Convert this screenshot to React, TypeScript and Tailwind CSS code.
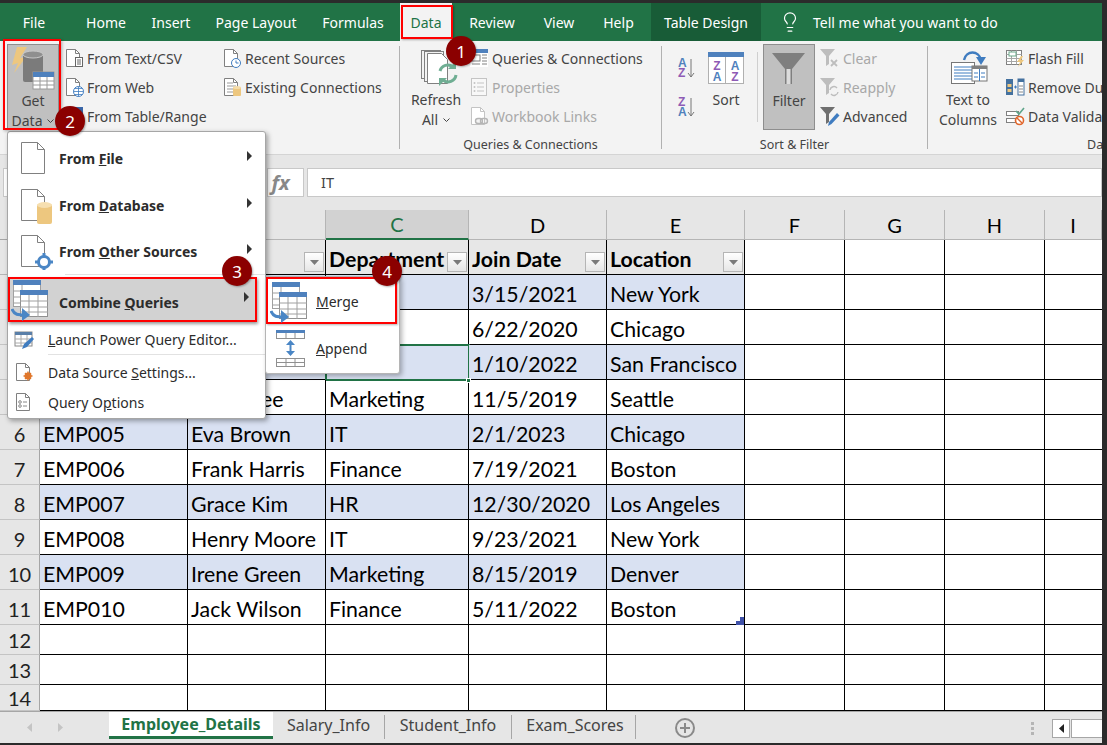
import React from 'react';
import { Lightbulb } from 'lucide-react';

const G = '#808080';
const BLUE = '#4f81bd';
const YEL = '#edc77f';

const Doc = ({ c = G }: { c?: string }) => (
  <>
    <path d="M2.5 1.5h9l4 4v13h-13z" fill="#fff" stroke={c} />
    <path d="M11.5 1.5v4h4" fill="none" stroke={c} />
  </>
);
const S = ({ children, w = 20, h = 20 }: { children: React.ReactNode; w?: number; h?: number }) => (
  <svg width={w} height={h} viewBox={`0 0 ${w} ${h}`} className="shrink-0 block">{children}</svg>
);

const IcCsv = () => (
  <S><Doc /><rect x="11.5" y="9.5" width="7" height="9" fill="#fff" stroke="#666" /><path d="M13 12h4M13 14h4M13 16h4" stroke="#666" /></S>
);
const IcWeb = () => (
  <S><Doc /><circle cx="14.5" cy="14.5" r="5" fill="#fff" stroke="#3f7cc0" /><path d="M9.5 14.5h10M14.5 9.5v10M11 11.5h7M11 17.5h7" stroke="#3f7cc0" strokeWidth="0.8" /></S>
);
const IcRange = () => (
  <S><rect x="1.5" y="1.5" width="17" height="17" fill="#fff" stroke="#3a66a8" /><rect x="1" y="1" width="18" height="5" fill="#3a66a8" /><path d="M7 6v12M13 6v12M2 12h16" stroke="#3a66a8" /></S>
);
const IcRecent = () => (
  <S><Doc /><circle cx="14" cy="15" r="4.5" fill="#fff" stroke="#3f7cc0" /><path d="M14 12.5V15h2.5" fill="none" stroke="#3f7cc0" /></S>
);
const IcExisting = () => (
  <S>
    <Doc />
    <path d="M5 6h6M5 9h9M5 12h7M5 15h7" stroke="#999" />
    <rect x="11" y="10" width="8" height="9" rx="1" fill={YEL} />
    <ellipse cx="15" cy="10.5" rx="4" ry="1.6" fill="#f5dca8" />
  </S>
);
const IcQueries = () => (
  <S>
    <rect x="1" y="1" width="18" height="18" fill="#fff" />
    <rect x="1" y="1" width="18" height="4" fill={BLUE} />
    <rect x="3" y="7" width="8" height="6" fill="#fff" stroke="#808080" />
    <path d="M13 7h5M13 10h5M13 13h5M13 16h5M3 16h8" stroke="#808080" />
  </S>
);
const IcProps = () => (
  <S>
    <rect x="2.5" y="1.5" width="15" height="17" fill="#f8f8f8" stroke="#c4c4c4" />
    <path d="M8 6h7M8 10h7M8 14h7" stroke="#c4c4c4" />
    <circle cx="5.5" cy="6" r="1" fill="#c4c4c4" /><circle cx="5.5" cy="10" r="1" fill="#c4c4c4" /><circle cx="5.5" cy="14" r="1" fill="#c4c4c4" />
  </S>
);
const IcLinks = () => (
  <S>
    <Doc c="#c4c4c4" />
    <rect x="6.5" y="12.5" width="7" height="5" rx="2.5" fill="#f3f3f3" stroke="#b5b5b5" strokeWidth="1.4" />
    <rect x="11.5" y="12.5" width="7" height="5" rx="2.5" fill="none" stroke="#b5b5b5" strokeWidth="1.4" />
  </S>
);
const Funnel = ({ c = '#808080' }: { c?: string }) => <path d="M0 1h15l-6 7v8l-3 2V8z" fill={c} />;
const IcClear = () => (
  <S><Funnel c="#bdbdbd" /><path d="M11 12l6 6M17 12l-6 6" stroke="#bdbdbd" strokeWidth="1.8" /></S>
);
const IcReapply = () => (
  <S><Funnel c="#bdbdbd" /><path d="M10 13a4 4 0 0 1 7-2M18 15a4 4 0 0 1-7 2" fill="none" stroke="#bdbdbd" strokeWidth="1.4" /></S>
);
const IcAdvanced = () => (
  <S><Funnel c="#6f6f6f" /><path d="M8 20l1-4 8-9 2.5 2.5-8 8.5z" fill="#3f7cc0" /></S>
);
const IcFlash = () => (
  <S>
    <rect x="1.5" y="2.5" width="15" height="14" fill="#fff" stroke="#808080" />
    <path d="M1.5 6.5h15M1.5 10.5h15M1.5 13.5h15M6.5 2.5v14M11.5 2.5v14" stroke="#a6a6a6" />
    <rect x="4" y="4" width="7" height="4" fill="#fff" stroke="#6aa88a" />
    <path d="M16 8l-4 6h3l-2 5 6-7h-3l2-4z" fill={YEL} />
  </S>
);
const IcDup = () => (
  <S>
    <rect x="1" y="2" width="7" height="16" fill="#44719f" />
    <rect x="2.5" y="7" width="4" height="3" fill={YEL} /><rect x="2.5" y="12" width="4" height="3" fill={YEL} />
    <rect x="13" y="2" width="6" height="16" fill="#fff" stroke="#44719f" />
    <rect x="13" y="2" width="6" height="3" fill="#44719f" />
    <path d="M14 9h4M14 12h4M14 15h4" stroke="#888" />
    <path d="M9 10h3M10.5 8.5v3" stroke="#3f7cc0" />
  </S>
);
const IcValid = () => (
  <S>
    <rect x="1.5" y="5.5" width="12" height="4" fill="#fff" stroke="#808080" />
    <rect x="1.5" y="12.5" width="12" height="4" fill="#fff" stroke="#808080" />
    <path d="M11 5l3 3 5-6" fill="none" stroke="#5fa58a" strokeWidth="1.6" />
    <circle cx="14.5" cy="14.5" r="4" fill="#fff" stroke="#e0662b" strokeWidth="1.6" />
    <path d="M12 12l5 5" stroke="#e0662b" strokeWidth="1.4" />
  </S>
);

const GetDataIcon = () => (
  <S w={52} h={46}>
    <path d="M20 2H10L5 20l6-2-4 10 12-16-6 1z" fill={YEL} />
    <rect x="16" y="9" width="20" height="28" rx="2" fill="#7b7b7b" />
    <ellipse cx="26" cy="9.5" rx="10" ry="3.5" fill="#8f8f8f" stroke="#c8c8c8" />
    <rect x="26" y="27" width="21" height="17" fill="#fff" stroke="#9a9a9a" />
    <rect x="26" y="27" width="21" height="5" fill={BLUE} />
    <path d="M33 32v12M40 32v12M26 36h21M26 40h21" stroke="#9a9a9a" />
  </S>
);
const RefreshIcon = () => (
  <S w={48} h={46}>
    <rect x="9.5" y="6.5" width="19" height="28" fill="#f3f3f3" stroke={G} />
    <rect x="12.5" y="7.5" width="19" height="30" fill="#f3f3f3" stroke={G} />
    <path d="M15.5 9.5h14l6 6v24h-20z" fill="#fff" stroke={G} />
    <path d="M28 27a8 8 0 0 1 13-4M44 31a8 8 0 0 1-13 5" fill="none" stroke="#6fae93" strokeWidth="3" />
    <path d="M44 17v8h-8zM27 42v-8h8z" fill="#6fae93" />
  </S>
);
const AZ = ({ a, b, ca, cb }: { a: string; b: string; ca: string; cb: string }) => (
  <S w={20} h={24}>
    <text x="1" y="11" fontSize="12" fontWeight="700" fill={ca} fontFamily="Liberation Sans">{a}</text>
    <text x="1" y="21" fontSize="12" fontWeight="700" fill={cb} fontFamily="Liberation Sans">{b}</text>
    <path d="M14 3v18M11 17l3 4 3-4" fill="none" stroke="#777" />
  </S>
);
const SortIcon = () => (
  <S w={36} h={32}>
    <rect x="0.5" y="0.5" width="35" height="31" fill="#fff" stroke="#b0b0b0" />
    <rect x="0" y="0" width="36" height="5" fill={BLUE} />
    <path d="M17.5 5v27" stroke="#b0b0b0" />
    <text x="9" y="18" textAnchor="middle" fontSize="12" fontWeight="600" fill="#8e5bb5" fontFamily="Liberation Sans">Z</text>
    <text x="9" y="29" textAnchor="middle" fontSize="12" fontWeight="600" fill={BLUE} fontFamily="Liberation Sans">A</text>
    <text x="27" y="18" textAnchor="middle" fontSize="12" fontWeight="600" fill={BLUE} fontFamily="Liberation Sans">A</text>
    <text x="27" y="29" textAnchor="middle" fontSize="12" fontWeight="600" fill="#8e5bb5" fontFamily="Liberation Sans">Z</text>
  </S>
);
const FilterIcon = () => (
  <S w={52} h={46}>
    <path d="M9 8h33L29 24v15h-7V24z" fill="#7f7f7f" />
    <rect x="23.5" y="24" width="4" height="15" fill="#dcdcdc" />
  </S>
);
const TextColsIcon = () => (
  <S w={56} h={46}>
    <rect x="11.5" y="18.5" width="23" height="21" fill="#fff" stroke="#777" />
    <path d="M14 23h18M14 26h18M14 29h18M14 32h18M14 35h18" stroke="#3f7cc0" />
    <rect x="32" y="22" width="15" height="15" fill="#fff" stroke="#777" />
    <rect x="32" y="22" width="15" height="3" fill="#808080" />
    <path d="M39.5 25v12M34 29h4M41 29h4M34 33h4M41 33h4" stroke="#3f7cc0" />
    <path d="M24 16c2-10 15-10 17 0" fill="none" stroke="#3f7cc0" strokeWidth="2.4" />
    <path d="M36 13h10l-5 8z" fill="#3f7cc0" />
  </S>
);

const MDoc = ({ extra, h = 36 }: { extra?: React.ReactNode; h?: number }) => (
  <S w={36} h={h}>
    <path d="M1.5 1.5h16l7 7v24h-23z" fill="#fff" stroke={G} />
    <path d="M17.5 1.5v7h7" fill="none" stroke={G} />
    {extra}
  </S>
);
const Combine = ({ w = 38, h = 42 }: { w?: number; h?: number }) => (
  <S w={w} h={h}>
    <rect x="2.5" y="1.5" width="27" height="26" fill="#fff" stroke="#a0a0a0" />
    <rect x="2" y="1" width="28" height="5" fill={BLUE} />
    <path d="M2 12h28M2 18h28M2 24h28M11 6v22" stroke="#a0a0a0" />
    <rect x="9.5" y="11.5" width="27" height="26" fill="#fff" stroke="#909090" />
    <rect x="9" y="11" width="28" height="5" fill={BLUE} />
    <path d="M9 22h28M9 28h28M9 33h28M18 16v22M27 16v22" stroke="#a0a0a0" />
    <path d="M1 30c2 6 6 6 14 6" fill="none" stroke="#4a86c5" strokeWidth="3" />
    <path d="M11 29l8 7-8 6z" fill="#4a86c5" />
  </S>
);
const AppendIc = () => (
  <S w={30} h={38}>
    <rect x="0.5" y="0.5" width="28" height="8" fill="#fff" stroke="#909090" />
    <rect x="0" y="0" width="29" height="3" fill={BLUE} />
    <path d="M10 3v5M19 3v5" stroke="#909090" />
    <rect x="0.5" y="28.5" width="28" height="8" fill="#fff" stroke="#909090" />
    <path d="M10 28v9M19 28v9M0 32.5h29" stroke="#909090" />
    <path d="M14.5 12v12" stroke="#4a86c5" strokeWidth="2" />
    <path d="M10 15l4.5-5 4.5 5zM10 21l4.5 5 4.5-5z" fill="#4a86c5" />
  </S>
);
const Arrow = () => (
  <svg width="5" height="10" viewBox="0 0 5 10" className="shrink-0 -mt-[6px]"><path d="M0 0l5 5-5 5z" fill="#333" /></svg>
);

const Row = ({ icon, text, off }: { icon: React.ReactNode; text: string; off?: boolean }) => (
  <div className={`flex items-center h-[29px] gap-[3px] whitespace-nowrap ${off ? 'text-[#a8a8a8]' : ''}`}>
    <div className="w-[20px]">{icon}</div>
    <span>{text}</span>
  </div>
);

const Big = ({ icon, l1, l2, caret, cls }: { icon: React.ReactNode; l1: string; l2?: string; caret?: boolean; cls: string }) => (
  <div className={`flex flex-col items-center h-[86px] mt-[3px] ${cls}`}>
    <div className="h-[46px] shrink-0">{icon}</div>
    <div className="leading-[20px] whitespace-nowrap">{l1}</div>
    {l2 && (
      <div className="leading-[20px] whitespace-nowrap flex items-center gap-[5px]">
        {l2}
        {caret && <svg width="7" height="4" viewBox="0 0 7 4"><path d="M0.5 0.5l3 3 3-3" fill="none" stroke="#444" /></svg>}
      </div>
    )}
  </div>
);

const Sep = () => <div className="w-px bg-[#b1b1b1] mt-[5px] mb-[5px] shrink-0" />;

const tabs: [string, string][] = [
  ['File', 'w-[68px]'],
  ['Home', 'w-[76px]'],
  ['Insert', 'w-[54px]'],
  ['Page Layout', 'w-[116px]'],
  ['Formulas', 'w-[78px]'],
];
const tabs2: [string, string][] = [
  ['Review', 'w-[80px]'],
  ['View', 'w-[54px]'],
  ['Help', 'w-[65px]'],
];

type RowData = { n: number; c: string[]; band?: boolean };
const rows: RowData[] = [
  { n: 2, c: ['', '', '', '3/15/2021', 'New York'], band: true },
  { n: 3, c: ['', '', '', '6/22/2020', 'Chicago'] },
  { n: 4, c: ['', '', '', '1/10/2022', 'San Francisco'], band: true },
  { n: 5, c: ['', 'David Lee', 'Marketing', '11/5/2019', 'Seattle'] },
  { n: 6, c: ['EMP005', 'Eva Brown', 'IT', '2/1/2023', 'Chicago'], band: true },
  { n: 7, c: ['EMP006', 'Frank Harris', 'Finance', '7/19/2021', 'Boston'] },
  { n: 8, c: ['EMP007', 'Grace Kim', 'HR', '12/30/2020', 'Los Angeles'], band: true },
  { n: 9, c: ['EMP008', 'Henry Moore', 'IT', '9/23/2021', 'New York'] },
  { n: 10, c: ['EMP009', 'Irene Green', 'Marketing', '8/15/2019', 'Denver'], band: true },
  { n: 11, c: ['EMP010', 'Jack Wilson', 'Finance', '5/11/2022', 'Boston'] },
  { n: 12, c: ['', '', '', '', ''] },
  { n: 13, c: ['', '', '', '', ''] },
  { n: 14, c: ['', '', '', '', ''] },
];
const colHeads = ['A', 'B', 'C', 'D', 'E', 'F', 'G', 'H', 'I'];
const cell = 'border-r border-b border-black flex items-center pl-[3px] pt-[5px] whitespace-nowrap overflow-hidden';
const headCell = 'border-r border-b border-black bg-[#e7e7e7] flex items-end justify-between pl-[3px] pb-[1px] pr-px font-bold text-black';

const FilterBtn = () => (
  <div className="w-[20px] h-[20px] shrink-0 mb-px border border-[#b5b5b5] bg-gradient-to-b from-white to-[#e6e6e6] flex items-center justify-center">
    <svg width="9" height="5" viewBox="0 0 9 5"><path d="M0 0h9L4.5 5z" fill="#7a7a7a" /></svg>
  </div>
);

const Badge = ({ n, cls }: { n: number; cls: string }) => (
  <div className={`absolute w-[30px] h-[30px] rounded-full bg-[#8b0000] text-white text-[17px] leading-none flex items-center justify-center shadow-[1px_1px_2px_rgba(0,0,0,0.3)] font-['Liberation_Sans',sans-serif] ${cls}`}>{n}</div>
);

export default function App() {
  return (
    <div className="relative w-[1107px] h-[745px] overflow-hidden bg-[#2b2b2b] pt-[3px] pr-[5px] pb-[2px] text-[14px] text-[#444] font-['Noto_Sans',sans-serif]">
      <div className="w-[1102px] h-[740px] flex flex-col overflow-hidden bg-white">
        {/* tab strip */}
        <div className="h-[38px] shrink-0 bg-[#217346] text-white flex items-center text-[14px]">
          {tabs.map(([t, w]) => (
            <div key={t} className={`${w} text-center`}>{t}</div>
          ))}
          <div className="w-[8px]" />
          <div className="w-[52px] h-full bg-[#f3f3f3] text-[#217346] flex items-center justify-center">Data</div>
          {tabs2.map(([t, w]) => (
            <div key={t} className={`${w} text-center`}>{t}</div>
          ))}
          <div className="w-[110px] h-full bg-[#185c37] flex items-center justify-center">Table Design</div>
          <div className="ml-[18px] w-[34px]"><Lightbulb size={22} strokeWidth={1.3} color="#fff" /></div>
          <div className="whitespace-nowrap">Tell me what you want to do</div>
        </div>

        {/* ribbon */}
        <div className="h-[114px] shrink-0 bg-[#f3f3f3] border-b border-[#d4d4d4] flex">
          <div className="w-[399px] shrink-0 flex">
            <Big icon={<GetDataIcon />} l1="Get" l2="Data" caret cls="ml-[7px] w-[52px] bg-[#c0c0c0] border border-[#8e8e8e]" />
            <div className="ml-[5px] w-[158px] mt-[2.5px]">
              <Row icon={<IcCsv />} text="From Text/CSV" />
              <Row icon={<IcWeb />} text="From Web" />
              <Row icon={<IcRange />} text="From Table/Range" />
            </div>
            <div className="mt-[2.5px]">
              <Row icon={<IcRecent />} text="Recent Sources" />
              <Row icon={<IcExisting />} text="Existing Connections" />
            </div>
          </div>
          <Sep />

          <div className="w-[261px] shrink-0 flex flex-col">
            <div className="h-[95px] flex">
              <Big icon={<RefreshIcon />} l1="Refresh" l2="All" caret cls="ml-[12px] w-[48px]" />
              <div className="ml-[9px] mt-[2.5px]">
                <Row icon={<IcQueries />} text="Queries & Connections" />
                <Row icon={<IcProps />} text="Properties" off />
                <Row icon={<IcLinks />} text="Workbook Links" off />
              </div>
            </div>
            <div className="text-center text-[12.5px] leading-[18px]">Queries &amp; Connections</div>
          </div>
          <Sep />

          <div className="w-[265px] shrink-0 flex flex-col">
            <div className="h-[95px] flex">
              <div className="ml-[15px] w-[20px] pt-[15px] flex flex-col gap-[15px]">
                <AZ a="A" b="Z" ca={BLUE} cb="#8e5bb5" />
                <AZ a="Z" b="A" ca="#8e5bb5" cb={BLUE} />
              </div>
              <Big icon={<div className="pt-[8px]"><SortIcon /></div>} l1="Sort" cls="ml-[11px] w-[36px]" />
              <div className="ml-[13px] w-px h-[70px] mt-[11px] bg-[#cfcfcf]" />
              <Big icon={<FilterIcon />} l1="Filter" cls="ml-[5px] w-[52px] bg-[#c0c0c0] border border-[#8e8e8e]" />
              <div className="ml-[5px] mt-[2.5px]">
                <Row icon={<IcClear />} text="Clear" off />
                <Row icon={<IcReapply />} text="Reapply" off />
                <Row icon={<IcAdvanced />} text="Advanced" />
              </div>
            </div>
            <div className="text-center text-[12.5px] leading-[18px]">Sort &amp; Filter</div>
          </div>
          <Sep />

          <div className="flex-1 min-w-0 overflow-hidden flex flex-col">
            <div className="h-[95px] flex">
              <Big icon={<TextColsIcon />} l1="Text to" l2="Columns" cls="ml-[12px] w-[56px] shrink-0" />
              <div className="ml-[9px] mt-[2.5px]">
                <Row icon={<IcFlash />} text="Flash Fill" />
                <Row icon={<IcDup />} text="Remove Duplicates" />
                <Row icon={<IcValid />} text="Data Validation" />
              </div>
            </div>
            <div className="ml-[159px] text-[12.5px] leading-[18px] whitespace-nowrap">Data Tools</div>
          </div>
        </div>

        {/* formula bar */}
        <div className="h-[55px] shrink-0 bg-[#e6e6e6] py-[13px] flex pl-[3px]">
          <div className="w-[230px] bg-white border border-[#c8c8c8]" />
          <div className="ml-[34px] w-[37px] bg-white border border-[#c8c8c8] flex items-center justify-center pr-[10px] text-[#888] italic font-bold text-[20px] font-['Liberation_Serif',serif]">fx</div>
          <div className="ml-[3px] flex-1 bg-white border border-[#c8c8c8] flex items-center pl-[13px] text-[14.5px]">IT</div>
        </div>

        {/* sheet */}
        <div className="h-[501px] shrink-0 overflow-hidden grid grid-cols-[40px_148px_138px_143px_138px_138px_100px_100px_100px_57px] grid-rows-[30px_repeat(11,35px)_30px_30px_26px] text-[21.3px] text-black font-[Lato,sans-serif]">
          <div className="bg-[#e6e6e6] border-r border-b border-[#a6a6a6]" />
          {colHeads.map((h) => (
            <div key={h} className={h === 'C' ? 'bg-[#d2d2d2] text-[#217346] border-b-2 border-b-[#217346] border-r border-r-[#b5b5b5] flex items-center justify-center text-[20px]' : 'bg-[#e6e6e6] border-r border-b border-[#b5b5b5] flex items-center justify-center text-[20px]'}>{h}</div>
          ))}

          <div className="bg-[#e6e6e6] border-r border-b border-[#b5b5b5]" />
          <div className={headCell}><span /><FilterBtn /></div>
          <div className={headCell}><span /><FilterBtn /></div>
          <div className={headCell}><span className="-mb-[3px]">Department</span><FilterBtn /></div>
          <div className={headCell}><span className="-mb-[3px]">Join Date</span><FilterBtn /></div>
          <div className={headCell}><span className="-mb-[3px]">Location</span><FilterBtn /></div>
          <div className="border-r border-b border-black" /><div className="border-r border-b border-black" /><div className="border-r border-b border-black" /><div className="border-b border-black" />

          {rows.map((r) => (
            <React.Fragment key={r.n}>
              <div className={`bg-[#e6e6e6] border-r border-r-[#a6a6a6] border-b border-b-[#c4c4c4] flex items-center justify-center text-[20px] text-[#222] ${r.n <= 11 ? 'pt-[4px]' : ''}`}>{r.n > 5 ? r.n : ''}</div>
              {r.c.map((v, i) => (
                <div
                  key={i}
                  className={`${cell} ${r.band ? 'bg-[#d9e1f2]' : ''} ${r.n === 4 && i === 2 ? 'outline-2 -outline-offset-1 outline-[#217346]' : ''}`}
                >
                  {v}
                </div>
              ))}
              <div className="border-r border-b border-black" /><div className="border-r border-b border-black" /><div className="border-r border-b border-black" /><div className="border-b border-black" />
            </React.Fragment>
          ))}
        </div>

        {/* sheet tabs */}
        <div className="h-[32px] shrink-0 bg-[#e6e6e6] border-t border-[#a6a6a6] flex text-[#444] text-[16px]">
          <div className="w-[109px] flex items-center pl-[27px] gap-[26px] shrink-0">
            <svg width="5" height="9" viewBox="0 0 5 9"><path d="M5 0L0 4.5 5 9z" fill="#c4c4c4" /></svg>
            <svg width="5" height="9" viewBox="0 0 5 9"><path d="M0 0l5 4.5L0 9z" fill="#c4c4c4" /></svg>
          </div>
          <div className="w-[164px] h-[27px] bg-white border-b-[3px] border-[#217346] text-[#217346] font-bold flex items-center justify-center">Employee_Details</div>
          <div className="w-[112px] h-[24px] flex items-center justify-center border-r border-[#a6a6a6] mt-[3px] pb-[4px]">Salary_Info</div>
          <div className="w-[127px] h-[24px] flex items-center justify-center border-r border-[#a6a6a6] mt-[3px] pb-[4px]">Student_Info</div>
          <div className="w-[124px] h-[24px] flex items-center justify-center border-r border-[#a6a6a6] mt-[3px] pb-[4px] pl-[3px]">Exam_Scores</div>
          <div className="ml-[39px] mt-[6px] w-[20px] h-[20px] rounded-full border-2 border-[#8a8a8a] flex items-center justify-center">
            <svg width="10" height="10" viewBox="0 0 10 10"><path d="M5 0v10M0 5h10" stroke="#8a8a8a" strokeWidth="2" /></svg>
          </div>
          <div className="ml-[336px] mt-[10px] w-[3px] flex flex-col gap-[2px]">
            <div className="h-[3px] bg-[#b5b5b5]" /><div className="h-[3px] bg-[#b5b5b5]" /><div className="h-[3px] bg-[#b5b5b5]" />
          </div>
          <div className="ml-[18px] mt-[7px] w-[18px] h-[19px] bg-white border border-[#a6a6a6] flex items-center justify-center">
            <svg width="5" height="9" viewBox="0 0 5 9"><path d="M5 0L0 4.5 5 9z" fill="#222" /></svg>
          </div>
          <div className="ml-px mt-[7px] flex-1 h-[19px] bg-white border-y border-l border-[#a6a6a6]" />
        </div>
      </div>

      {/* Get Data menu */}
      <div className="absolute left-[7px] top-[131px] w-[259px] h-[288px] bg-white border border-[#a6a6a6] rounded-[3px] shadow-[2px_2px_5px_rgba(0,0,0,0.35)] pt-[3px] text-[#2c2c2c]">
        {[
          ['F', 'From ', 'ile', <MDoc key="a" />],
          ['D', 'From ', 'atabase', <MDoc key="b" extra={<><rect x="17" y="16" width="15" height="20" rx="2" fill={YEL} /><ellipse cx="24.5" cy="17" rx="7.5" ry="3" fill="#f6dfb0" /></>} />],
          ['O', 'From ', 'ther Sources', <MDoc key="c" extra={<><circle cx="24" cy="28" r="5.5" fill="#fff" stroke="#4a86c5" strokeWidth="3" /><path d="M24 19v3M24 34v3M15 28h3M30 28h3" stroke="#4a86c5" strokeWidth="3" /></>} />],
        ].map(([u, a, b, ic], i) => (
          <div key={i} className={`flex items-center pr-[13px] ${i === 2 ? 'h-[45px]' : 'h-[47px]'}`}>
            <div className="w-[51px] pl-[12px] shrink-0">{ic}</div>
            <div className="flex-1 font-bold text-[14px] whitespace-nowrap">{a}<span className="underline">{u}</span>{b}</div>
            <Arrow />
          </div>
        ))}
        <div className="h-px ml-[57px] bg-[#e2e2e2]" />
        <div className="mt-[2px] w-[249px] h-[45px] bg-[#d2d2d2] border-2 border-[#ff0000] shadow-[1px_2px_3px_rgba(0,0,0,0.4)] flex items-center pr-[6px] box-border">
          <div className="w-[49px] pl-[1px] pt-[1px] shrink-0"><Combine /></div>
          <div className="flex-1 font-bold text-[14px] whitespace-nowrap pt-[6px]">Combine <span className="underline">Q</span>ueries</div>
          <Arrow />
        </div>
        <div className="h-[32px] pt-[3px] flex items-center pl-[6px] text-[14px]">
          <div className="w-[34px]">
            <S>
              <rect x="1" y="2" width="17" height="14" fill="#fff" stroke="#8a8a8a" /><rect x="1" y="2" width="17" height="3" fill="#5a7fa8" />
              <path d="M7 5v11M13 5v11M1 9h17M1 13h17" stroke="#aaa" /><path d="M8 19l2-5 8-7 2 2-7 8z" fill="#3f7cc0" />
            </S>
          </div>
          <div className="whitespace-nowrap"><span className="underline">L</span>aunch Power Query Editor...</div>
        </div>
        <div className="h-px ml-[40px] bg-[#e2e2e2]" />
        <div className="h-[34px] flex items-center pl-[6px] text-[14px]">
          <div className="w-[34px]">
            <S><Doc /><circle cx="14" cy="14" r="3.5" fill="#e0772b" /><circle cx="14" cy="14" r="1.2" fill="#fff" /><path d="M14 9.5v9M9.5 14h9M11 11l6 6M17 11l-6 6" stroke="#e0772b" strokeWidth="1.4" /></S>
          </div>
          <div className="whitespace-nowrap">Data Source <span className="underline">S</span>ettings...</div>
        </div>
        <div className="h-[26px] flex items-center pl-[6px] text-[14px]">
          <div className="w-[34px]">
            <S><Doc /><circle cx="6" cy="10" r="1.3" fill="none" stroke="#888" /><circle cx="6" cy="14" r="1.3" fill="none" stroke="#888" /><path d="M9 10h4M9 14h4" stroke="#888" /></S>
          </div>
          <div className="whitespace-nowrap">Query O<span className="underline">p</span>tions</div>
        </div>
      </div>

      {/* Combine submenu */}
      <div className="absolute left-[265px] top-[276px] w-[135px] h-[98px] bg-white border border-[#b5b5b5] rounded-[3px] shadow-[2px_2px_5px_rgba(0,0,0,0.3)] text-[#2c2c2c] text-[14px]">
        <div className="w-[131px] h-[47px] border-2 border-[#ff0000] shadow-[1px_1px_2px_rgba(0,0,0,0.3)] flex items-center pl-[2px]">
          <div className="w-[46px] pt-[3px]"><Combine /></div>
          <div className="pt-[2px]"><span className="underline">M</span>erge</div>
        </div>
        <div className="h-[49px] flex items-center pl-[10px]">
          <div className="w-[40px]"><AppendIc /></div>
          <div><span className="underline">A</span>ppend</div>
        </div>
      </div>

      {/* callouts */}
      <div className="absolute left-[401px] top-[5px] w-[52px] h-[34px] border-2 border-[#ff0000] shadow-[1px_1px_2px_rgba(0,0,0,0.3)]" />
      <div className="absolute left-[3px] top-[39px] w-[58px] h-[91px] border-2 border-[#ff0000] shadow-[1px_1px_3px_rgba(0,0,0,0.3)]" />
      <div className="absolute left-[466px] top-[378px] w-[5px] h-[5px] bg-[#217346] border border-white" />
      <svg width="8" height="8" viewBox="0 0 8 8" className="absolute left-[736px] top-[617px]"><path d="M4 0h4v8H0V4h4z" fill="#3f51a8" /></svg>
      <Badge n={1} cls="left-[446px] top-[36px]" />
      <Badge n={2} cls="left-[55px] top-[106px]" />
      <Badge n={3} cls="left-[222px] top-[256px]" />
      <Badge n={4} cls="left-[372px] top-[256px]" />
    </div>
  );
}
